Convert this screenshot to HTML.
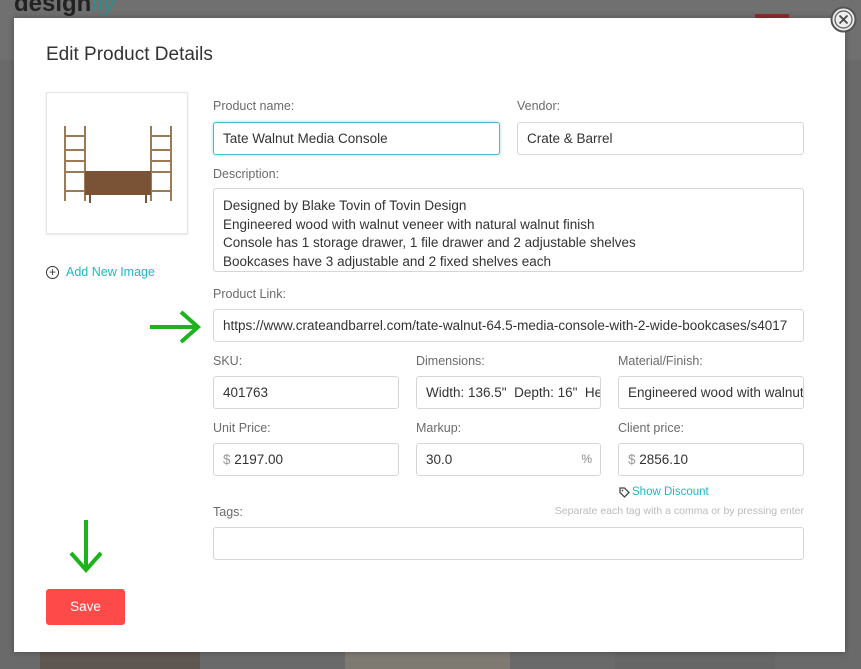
<!DOCTYPE html>
<html><head><style>
*{box-sizing:border-box;margin:0;padding:0}
body{width:861px;height:669px;overflow:hidden;background:#6a6a6a;font-family:"Liberation Sans",sans-serif;position:relative}
.a{position:absolute}
.modal{left:14px;top:18px;width:831px;height:634px;background:#fff;box-shadow:0 0 6px rgba(0,0,0,.3)}
.lbl{position:absolute;font-size:12.5px;color:#6b6b6b}
.in{position:absolute;border:1px solid #d6d6d6;border-radius:3px;height:33px;font-size:13.5px;color:#333;padding:0 9px;line-height:31px;white-space:nowrap;overflow:hidden;background:#fff}
</style></head><body>
<div class="a" style="left:0;top:0;width:861px;height:60px;background:#707070"></div>
<div class="a" style="left:14px;top:0px;font-size:24px;color:#222;font-weight:bold;line-height:16px;height:18px;overflow:hidden"><span style="position:relative;top:-4px">design<span style="color:#2a8f8f;font-style:italic;font-weight:normal">fly</span></span></div>
<div class="a" style="left:755px;top:14px;width:34px;height:4px;background:#8a3030"></div>
<div class="a" style="left:40px;top:652px;width:160px;height:17px;background:#5e5650"></div>
<div class="a" style="left:345px;top:652px;width:165px;height:17px;background:#7e7a72"></div>
<div class="a" style="left:615px;top:652px;width:160px;height:17px;background:#666"></div>
<div class="a modal"></div>
<svg class="a" style="left:830px;top:6px" width="27" height="27"><circle cx="13.5" cy="13.5" r="12" fill="#eee" stroke="#555" stroke-width="2"/><circle cx="13.5" cy="13.5" r="8.5" fill="none" stroke="#555" stroke-width="1.2"/><g stroke="#444" stroke-width="1.8"><line x1="9.5" y1="9.5" x2="17.5" y2="17.5"/><line x1="17.5" y1="9.5" x2="9.5" y2="17.5"/></g></svg>
<div class="a" style="left:46px;top:44px;font-size:19px;color:#333">Edit Product Details</div>
<div class="a" style="left:46px;top:92px;width:142px;height:142px;border:1px solid #e6e6e6;box-shadow:0 1px 2px rgba(0,0,0,.1)">
<svg width="142" height="142" viewBox="0 0 142 142">
<g stroke="#9b7a55" stroke-width="2" fill="none">
<line x1="18" y1="33" x2="18" y2="108"/><line x1="38" y1="33" x2="38" y2="108"/>
<line x1="104" y1="33" x2="104" y2="108"/><line x1="124" y1="33" x2="124" y2="108"/>
<line x1="18" y1="43" x2="38" y2="43"/><line x1="18" y1="57" x2="38" y2="57"/><line x1="18" y1="68" x2="38" y2="68"/><line x1="18" y1="79" x2="38" y2="79"/><line x1="18" y1="98" x2="38" y2="98"/>
<line x1="104" y1="43" x2="124" y2="43"/><line x1="104" y1="57" x2="124" y2="57"/><line x1="104" y1="68" x2="124" y2="68"/><line x1="104" y1="79" x2="124" y2="79"/><line x1="104" y1="98" x2="124" y2="98"/>
</g>
<rect x="38" y="78" width="66" height="24" fill="#7a5235"/>
<line x1="43" y1="102" x2="43" y2="110" stroke="#7a5235" stroke-width="2"/><line x1="99" y1="102" x2="99" y2="110" stroke="#7a5235" stroke-width="2"/>
</svg></div>
<div class="a" style="left:46px;top:266px;width:13px;height:13px;border:1.3px solid #333;border-radius:50%;font-size:12px;line-height:10px;text-align:center;color:#333">+</div>
<div class="a" style="left:66px;top:265px;font-size:12.5px;color:#1bb8c8">Add New Image</div>

<div class="lbl" style="left:213px;top:99px">Product name:</div>
<div class="in" style="left:213px;top:122px;width:287px;border-color:#49b9cc;box-shadow:0 0 3px #9bdbe5">Tate Walnut Media Console</div>
<div class="lbl" style="left:517px;top:99px">Vendor:</div>
<div class="in" style="left:517px;top:122px;width:287px">Crate &amp; Barrel</div>

<div class="lbl" style="left:213px;top:167px">Description:</div>
<div class="in" style="left:213px;top:188px;width:591px;height:84px;line-height:18.5px;padding-top:8px">Designed by Blake Tovin of Tovin Design<br>Engineered wood with walnut veneer with natural walnut finish<br>Console has 1 storage drawer, 1 file drawer and 2 adjustable shelves<br>Bookcases have 3 adjustable and 2 fixed shelves each</div>

<div class="lbl" style="left:213px;top:287px">Product Link:</div>
<div class="in" style="left:213px;top:309px;width:591px">https://www.crateandbarrel.com/tate-walnut-64.5-media-console-with-2-wide-bookcases/s4017</div>

<div class="lbl" style="left:213px;top:354px">SKU:</div>
<div class="in" style="left:213px;top:376px;width:186px">401763</div>
<div class="lbl" style="left:416px;top:354px">Dimensions:</div>
<div class="in" style="left:416px;top:376px;width:185px">Width: 136.5"&nbsp; Depth: 16"&nbsp; Height</div>
<div class="lbl" style="left:618px;top:354px">Material/Finish:</div>
<div class="in" style="left:618px;top:376px;width:186px">Engineered wood with walnut</div>

<div class="lbl" style="left:213px;top:421px">Unit Price:</div>
<div class="in" style="left:213px;top:443px;width:186px"><span style="color:#999">$</span> 2197.00</div>
<div class="lbl" style="left:416px;top:421px">Markup:</div>
<div class="in" style="left:416px;top:443px;width:185px">30.0<span style="position:absolute;right:8px;color:#888;font-size:12px">%</span></div>
<div class="lbl" style="left:618px;top:421px">Client price:</div>
<div class="in" style="left:618px;top:443px;width:186px"><span style="color:#999">$</span> 2856.10</div>

<svg class="a" style="left:619px;top:487px" width="11" height="11"><path d="M1 1 H5.5 L10 5.5 L5.5 10 L1 5.5 Z" fill="none" stroke="#444" stroke-width="1.3"/><circle cx="3.5" cy="3.5" r="0.9" fill="#444"/></svg>
<div class="a" style="left:632px;top:486px;font-size:11.5px;color:#1bb8c8">Show Discount</div>
<div class="lbl" style="left:213px;top:505px">Tags:</div>
<div class="a" style="right:57px;top:505px;font-size:10.5px;color:#bbb">Separate each tag with a comma or by pressing enter</div>
<div class="in" style="left:213px;top:527px;width:591px"></div>

<div class="a" style="left:46px;top:589px;width:79px;height:36px;background:#ff4a4a;border-radius:3px;color:#fff;font-size:13.5px;text-align:center;line-height:36px">Save</div>

<svg class="a" style="left:148px;top:310px" width="55" height="34"><g stroke="#1db31d" stroke-width="4" fill="none"><line x1="2" y1="17" x2="50" y2="17"/><polyline points="33,2 50,17 33,32"/></g></svg>
<svg class="a" style="left:68px;top:519px" width="36" height="55"><g stroke="#1db31d" stroke-width="4" fill="none"><line x1="18" y1="1" x2="18" y2="50"/><polyline points="3,34 18,51 33,34"/></g></svg>
</body></html>
